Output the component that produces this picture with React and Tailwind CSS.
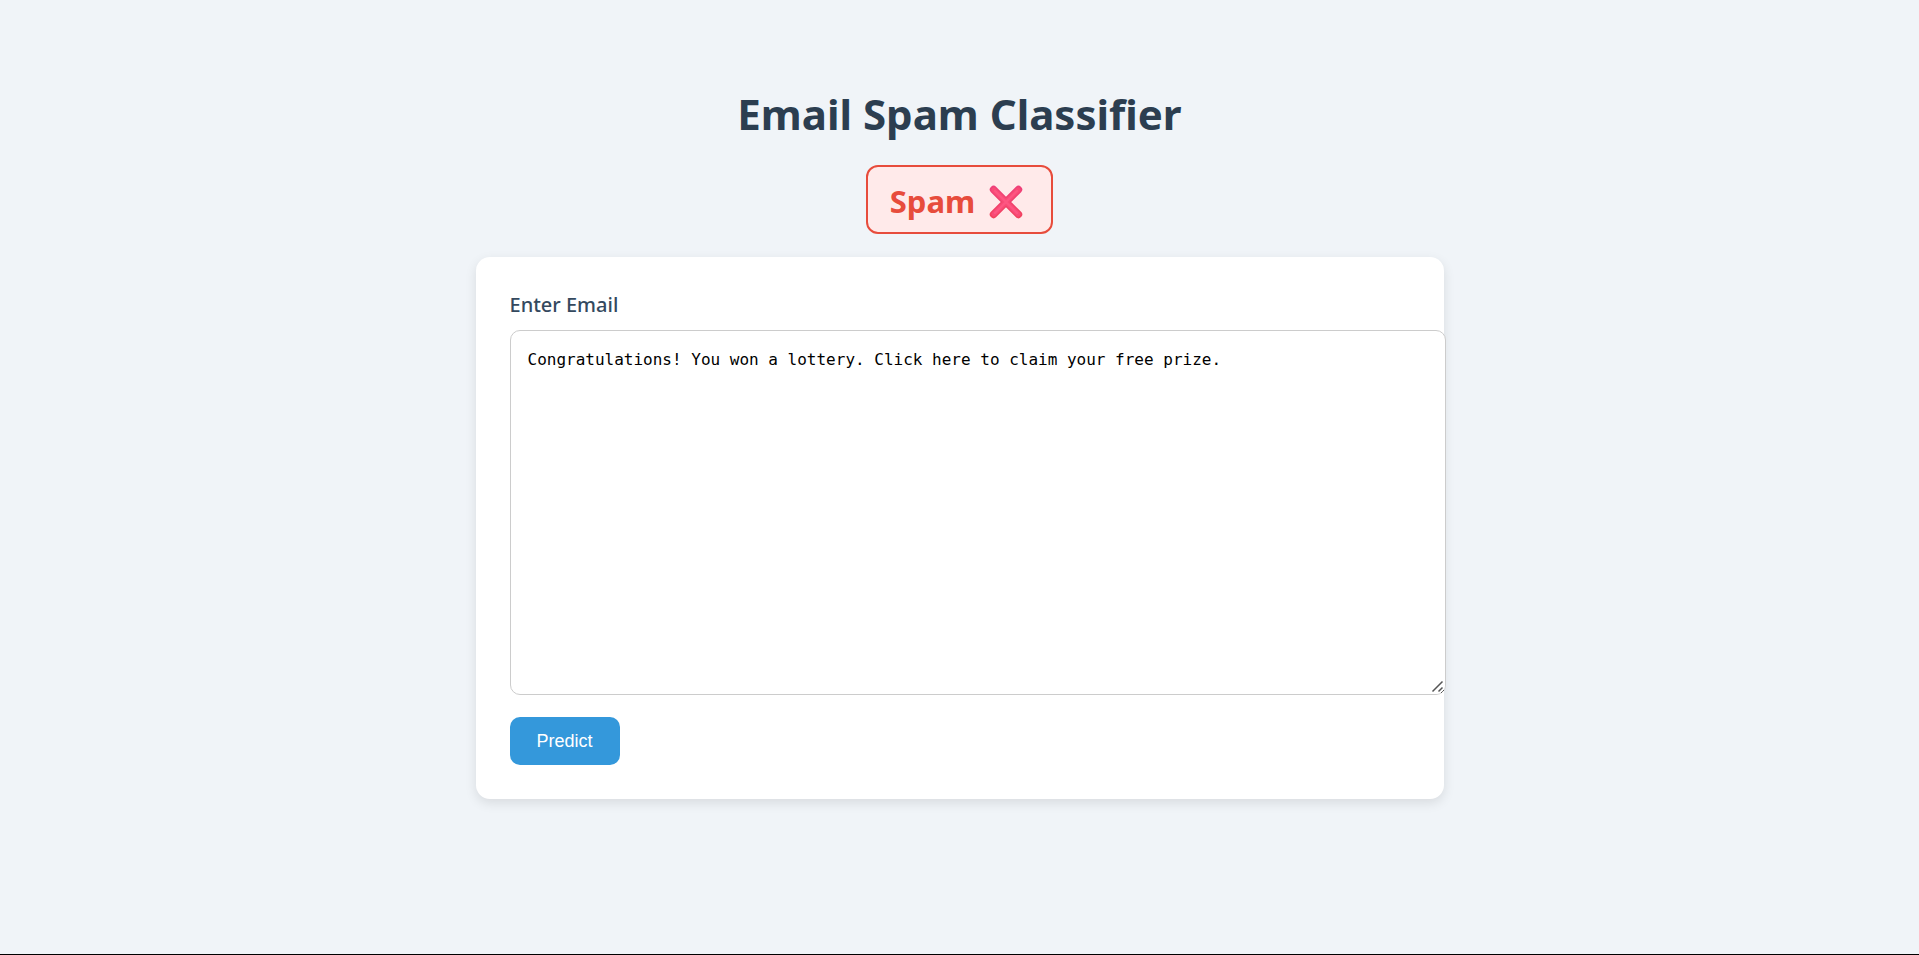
import { useState } from "react";

function CrossMark() {
  return (
    <svg viewBox="0 0 34 34" className="h-[34px] w-[34px]" role="img" aria-label="Spam detected">
      <defs>
        <linearGradient id="cross" gradientUnits="userSpaceOnUse" x1="0" y1="0" x2="0" y2="34">
          <stop offset="0" stopColor="#ee3f7c" />
          <stop offset="1" stopColor="#f1435c" />
        </linearGradient>
      </defs>
      <path d="M4.6 4.6 29.4 29.4M29.4 4.6 4.6 29.4" fill="none" stroke="url(#cross)" strokeWidth="7.6" strokeLinecap="round" />
      <path d="M5 5 29 29M29 5 5 29" fill="none" stroke="#f84b76" strokeWidth="5" strokeLinecap="round" />
      <path d="M6 6 28 28M28 6 6 28" fill="none" stroke="#fd5682" strokeWidth="2.4" strokeLinecap="round" />
    </svg>
  );
}

function ResizeGrip() {
  return (
    <svg
      viewBox="0 0 16 16"
      className="pointer-events-none absolute right-px bottom-px h-4 w-4 rounded-br-[9px] bg-white"
      aria-hidden="true"
    >
      <path d="M3.5 13.5 13.5 3.5M9.5 13.5 13.5 9.5" fill="none" stroke="#555555" strokeWidth="1.5" />
    </svg>
  );
}

export default function App() {
  const [email, setEmail] = useState(
    "Congratulations! You won a lottery. Click here to claim your free prize."
  );

  return (
    <main className="flex min-h-screen flex-col items-center border-b border-black bg-[#f0f4f8] px-4 pt-[84px] font-['Noto_Sans','Open_Sans',sans-serif]">
      <h1 className="text-[42px] leading-[60px] font-bold text-[#2c3e50]">Email Spam Classifier</h1>

      <div className="mt-[21px] flex h-[69px] items-center gap-[14px] rounded-xl border-2 border-[#e74c3c] bg-[#ffeaea] pt-1 pr-7 pl-[22px] text-[31px] font-bold text-[#e74c3c]">
        <span>Spam</span>
        <CrossMark />
      </div>

      <form
        onSubmit={(e) => e.preventDefault()}
        className="mt-[23px] flex w-full max-w-[968px] flex-col items-start rounded-[14px] bg-white p-[34px] shadow-[0_4px_12px_rgba(0,0,0,0.1)]"
      >
        <label htmlFor="email" className="text-xl leading-7 font-medium text-[#34495e]">
          Enter Email
        </label>
        <div className="relative mt-[11px] flex w-[calc(100%+36px)]">
          <textarea
            id="email"
            value={email}
            onChange={(e) => setEmail(e.target.value)}
            className="h-[365px] w-full resize-y rounded-[10px] border border-[#cccccc] bg-white p-[17px] font-['DejaVu_Sans_Mono',monospace] text-base leading-6 text-black outline-none"
          />
          <ResizeGrip />
        </div>
        <button
          type="submit"
          className="mt-[22px] h-12 rounded-[10px] bg-[#3498db] px-[27px] font-['Liberation_Sans',sans-serif] text-lg text-white"
        >
          Predict
        </button>
      </form>
    </main>
  );
}
